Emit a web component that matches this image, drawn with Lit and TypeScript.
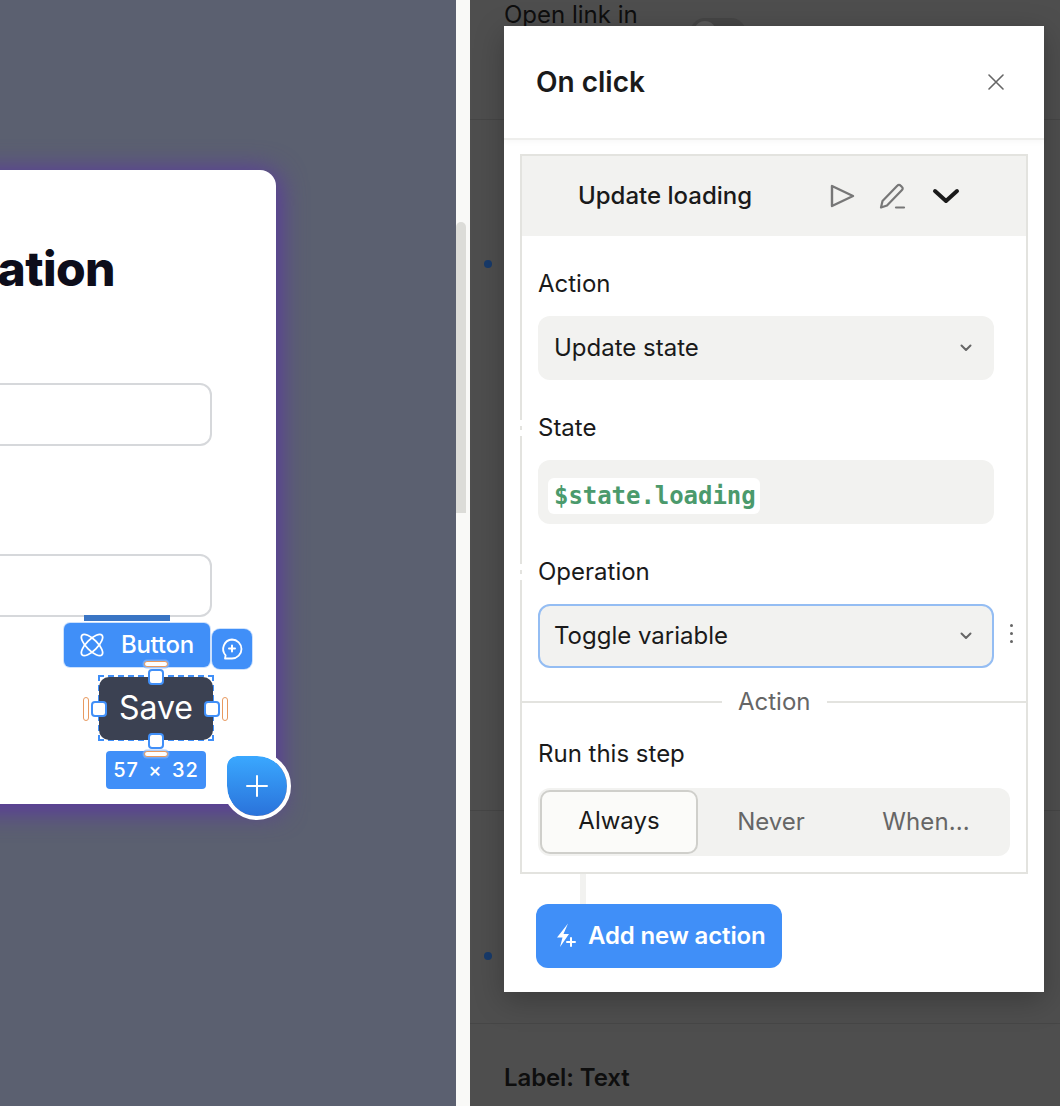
import { LitElement, html, css } from "lit";
import { customElement } from "lit/decorators.js";

const chev = html`<svg class="chev" width="12" height="8" viewBox="0 0 12 8" fill="none"><path d="M1.5 1.5 6 6l4.5-4.5" stroke="#666" stroke-width="2" stroke-linecap="round" stroke-linejoin="round"/></svg>`;

@customElement("app-root")
export class AppRoot extends LitElement {
  static styles = css`
    :host { display: block; width: 1060px; height: 1106px; overflow: hidden; font-family: Inter, "Liberation Sans", sans-serif; color: #1a1a1a; }
    * { box-sizing: border-box; }
    .page { display: flex; width: 1060px; height: 1106px; }
    .canvas { position: relative; width: 456px; height: 1106px; background: #5b6070; overflow: hidden; flex: none; }
    .card { position: absolute; left: -300px; top: 170px; width: 576px; height: 634px; background: #fff; border-radius: 16px 16px 0 0; box-shadow: 0 4px 26px 4px #5a38a0; }
    .title { position: absolute; right: 161px; top: 66px; font-size: 48px; line-height: 66px; font-weight: 800; color: #0d0d1a; letter-spacing: -0.6px; white-space: nowrap; }
    .input { position: absolute; left: 0; width: 512px; height: 63px; border: 2px solid #d6d8db; border-radius: 12px; background: #fff; }
    .input.a { top: 213px; }
    .input.b { top: 384px; }
    .strip { position: absolute; left: 84px; top: 615px; width: 86px; height: 6px; background: #3a75c4; }
    .tag { position: absolute; left: 64px; top: 623px; width: 146px; height: 44px; background: #408ff8; border-radius: 6px; color: #fff; display: flex; align-items: center; gap: 17px; padding: 0 0 2px 16px; font-size: 24px; font-weight: 500; letter-spacing: -0.3px; box-shadow: 0 0 0 1px #7fb3fa66; }
    .tag svg { flex: none; margin-top: 2px; }
    .comment { position: absolute; left: 212px; top: 629px; width: 40px; height: 40px; background: #408ff8; border-radius: 8px; display: flex; align-items: center; justify-content: center; box-shadow: 0 0 0 1px #7fb3fa66; }
    .dash { position: absolute; left: 98px; top: 675px; width: 116px; height: 66px; border: 2px dashed #408ff8; }
    .save { position: absolute; left: 99px; top: 677px; width: 114px; height: 63px; background: #3b4152; border-radius: 10px; color: #fff; font-size: 32px; line-height: 61px; text-align: center; }
    .h { position: absolute; width: 16px; height: 16px; background: #fff; border: 2px solid #408ff8; border-radius: 4px; }
    .pill { position: absolute; background: #fff; border: 1.5px solid #e89a60; border-radius: 3px; }
    .pill.hz { width: 24px; height: 6px; box-shadow: 0 0 0 1.5px #8ab6f4aa; }
    .pill.vt { width: 6px; height: 24px; }
    .size { position: absolute; left: 106px; top: 751px; width: 100px; height: 38px; background: #408ff8; border-radius: 4px; color: #fff; font-size: 20px; line-height: 38px; text-align: center; letter-spacing: 1px; word-spacing: 3px; font-weight: 500; white-space: pre; }
    .add { position: absolute; left: 223px; top: 752px; width: 68px; height: 68px; border-radius: 14px 50% 50% 50%; border: 4px solid #fff; background: linear-gradient(#3aa8ff, #2a72da) padding-box; display: flex; align-items: center; justify-content: center; }

    .rail { position: relative; width: 14px; height: 1106px; background: #f9f9f7; flex: none; }
    .thumb { position: absolute; left: 0; top: 222px; width: 10px; height: 291px; background: #dcdcd8; border-radius: 6px 6px 0 0; }

    .back { position: relative; flex: 1; height: 1106px; background: #4e4e4e; display: flex; flex-direction: column; overflow: hidden; }
    .sec { border-bottom: 1px solid #464646; flex: none; position: relative; }
    .sec.s1 { height: 120px; }
    .sec.s2 { height: 691px; }
    .sec.s3 { height: 213px; }
    .open { position: absolute; left: 34px; top: 0; font-size: 24px; line-height: 30px; color: #0e0e0e; }
    .toggle { position: absolute; left: 220px; top: 18px; width: 56px; height: 30px; border-radius: 15px; background: #454545; }
    .toggle:before { content: ""; position: absolute; left: 4px; top: 3px; width: 22px; height: 22px; border-radius: 50%; background: #5a5a5a; }
    .dot { position: absolute; left: 14px; width: 8px; height: 8px; border-radius: 50%; background: #173a6a; }
    .lbl { padding: 39px 0 0 34px; font-size: 24px; line-height: 30px; font-weight: 600; color: #0e0e0e; letter-spacing: -0.1px; }

    .modal { position: absolute; left: 504px; top: 26px; width: 540px; height: 966px; background: #fff; box-shadow: 0 8px 28px rgba(0,0,0,.25); }
    .mhead { height: 114px; display: flex; align-items: center; justify-content: space-between; padding: 0 40px 0 32px; border-bottom: 2px solid #eeeeec; box-shadow: 0 2px 6px rgba(0,0,0,.03); }
    .mhead h2 { margin: 0; font-size: 28px; font-weight: 600; line-height: 36px; }
    .mbody { padding: 14px 16px 0; }
    .block { position: relative; border: 2px solid #e3e3df; height: 720px; }
    .bhead { height: 80px; background: #f2f2f0; display: flex; align-items: center; padding-left: 56px; font-size: 24px; font-weight: 500; }
    .bhead .t { width: 251px; padding-bottom: 2px; }
    .bhead .ic { display: flex; align-items: center; gap: 24px; }
    .bbody { padding: 32px 16px 0; display: flex; flex-direction: column; }
    .fl { font-size: 24px; line-height: 32px; margin-bottom: 16px; }
    .sel { width: 456px; height: 64px; border-radius: 12px; background: #f2f2f0; display: flex; align-items: center; justify-content: space-between; padding: 0 22px 2px 16px; font-size: 24px; margin-bottom: 32px; flex: none; }
    .sel .chev { margin-top: 2px; }
    .sel.focus { border: 2px solid #94bdf3; padding: 0 20px 2px 14px; margin-bottom: 18px; position: relative; }
    .sel.code { padding: 8px 0 0 10px; }
    .chip { background: #fff; border-radius: 6px; height: 36px; padding: 0 4px 0 6px; font-family: "DejaVu Sans Mono", "Liberation Mono", monospace; font-weight: 700; font-size: 24px; line-height: 36px; color: #4b9a6c; letter-spacing: -0.05px; }
    .more { position: absolute; left: 488px; top: 468px; display: flex; flex-direction: column; gap: 5px; }
    .more i { display: block; width: 3px; height: 3px; border-radius: 50%; background: #666; }
    .div { display: flex; align-items: center; margin: 0 0 20px -16px; width: 504px; height: 32px; color: #666; font-size: 24px; }
    .div span { padding: 0 16px 2px; }
    .div:before, .div:after { content: ""; height: 2px; background: #e3e3df; }
    .div:before { width: 200px; }
    .div:after { flex: 1; }
    .seg { width: 472px; height: 68px; background: #f2f2f0; border-radius: 12px; padding: 2px; display: flex; align-items: center; font-size: 24px; color: #666; }
    .seg div { text-align: center; padding-bottom: 2px; }
    .seg .on { width: 158px; height: 64px; line-height: 58px; background: #fbfbf9; border: 2px solid #cfcfcb; border-radius: 10px; color: #1a1a1a; flex: none; }
    .seg .n { width: 146px; }
    .seg .w { flex: 1; letter-spacing: .1px; }
    .tick { position: absolute; left: -2px; width: 2px; height: 16px; background: linear-gradient(#fff 0 40%, #e3e3df 40% 60%, #fff 60%); }
    .conn { width: 6px; height: 30px; margin-left: 60px; background: #f2f2f0; }
    .btn { width: 246px; height: 64px; margin-left: 32px; border-radius: 12px; background: #408ff8; color: #fff; font-size: 24px; font-weight: 600; letter-spacing: -0.15px; display: flex; align-items: center; gap: 10px; padding: 0 0 2px 18px; }
    .btn svg { margin-top: 2px; flex: none; }
  `;

  render() {
    return html`<div class="page">
      <div class="canvas">
        <div class="card">
          <div class="title">ation</div>
          <div class="input a"></div>
          <div class="input b"></div>
        </div>
        <div class="strip"></div>
        <div class="tag">
          <svg width="24" height="24" viewBox="0 0 24 24" fill="none" stroke="#fff" stroke-width="1.8"><ellipse cx="12" cy="12" rx="14" ry="5.5" transform="rotate(45 12 12)"/><ellipse cx="12" cy="12" rx="14" ry="5.5" transform="rotate(-45 12 12)"/></svg>
          <span>Button</span>
        </div>
        <div class="comment">
          <svg width="24" height="24" viewBox="0 0 24 24" fill="none" stroke="#fff" stroke-width="1.8" stroke-linecap="round" stroke-linejoin="round"><path d="M12.5 2a9.5 9.5 0 0 1 0 19H5.5l.6-3.2A9.5 9.5 0 0 1 12.5 2Z" transform="translate(-.5 .5)"/><path d="M12 8.5v6M9 11.5h6" stroke-width="2"/></svg>
        </div>
        <div class="pill hz" style="left:144px;top:661px"></div>
        <div class="dash"></div>
        <div class="save">Save</div>
        <div class="h" style="left:148px;top:669px"></div>
        <div class="h" style="left:148px;top:733px"></div>
        <div class="h" style="left:91px;top:701px"></div>
        <div class="h" style="left:204px;top:701px"></div>
        <div class="pill vt" style="left:83px;top:697px"></div>
        <div class="pill vt" style="left:222px;top:697px"></div>
        <div class="size">57 × 32</div>
        <div class="pill hz" style="left:144px;top:751px"></div>
        <div class="add">
          <svg width="22" height="22" viewBox="0 0 22 22" stroke="#fff" stroke-width="2" stroke-linecap="round"><path d="M11 1v20M1 11h20"/></svg>
        </div>
      </div>
      <div class="rail"><div class="thumb"></div></div>
      <div class="back">
        <div class="sec s1"><div class="open">Open link in</div><div class="toggle"></div></div>
        <div class="sec s2"><div class="dot" style="top:140px"></div><div class="dot" style="top:832px"></div></div>
        <div class="sec s3"></div>
        <div class="lbl">Label: Text</div>
      </div>
      <div class="modal">
        <div class="mhead">
          <h2>On click</h2>
          <svg width="16" height="16" viewBox="0 0 16 16" stroke="#666" stroke-width="1.6" stroke-linecap="round"><path d="M1 1l14 14M15 1 1 15"/></svg>
        </div>
        <div class="mbody">
          <div class="block">
            <div class="bhead">
              <span class="t">Update loading</span>
              <span class="ic">
                <svg width="26" height="26" viewBox="0 0 26 26" fill="none" stroke="#777" stroke-width="2.4" stroke-linejoin="round"><path d="M3 3v20l21-10Z"/></svg>
                <svg width="28" height="28" viewBox="0 0 28 28" fill="none" stroke="#777" stroke-width="2.2" stroke-linejoin="round" stroke-linecap="round"><path d="M2 25.5l1.5-6.5L18.5 3.5a2 2 0 0 1 3 0l1.5 1.5a2 2 0 0 1 0 3L8 23.5Z"/><path d="M17 25.5h8"/></svg>
                <svg width="30" height="16" viewBox="0 0 30 16" fill="none" stroke="#1a1a1a" stroke-width="4" stroke-linecap="round" stroke-linejoin="round"><path d="M4 3l11 10L26 3"/></svg>
              </span>
            </div>
            <div class="tick" style="top:264px"></div>
            <div class="tick" style="top:408px"></div>
            <div class="bbody">
              <div class="fl">Action</div>
              <div class="sel"><span>Update state</span>${chev}</div>
              <div class="fl">State</div>
              <div class="sel code"><span class="chip">$state.loading</span></div>
              <div class="fl">Operation</div>
              <div class="sel focus"><span>Toggle variable</span>${chev}</div>
              <div class="more"><i></i><i></i><i></i></div>
              <div class="div"><span>Action</span></div>
              <div class="fl" style="margin-bottom:18px">Run this step</div>
              <div class="seg"><div class="on">Always</div><div class="n">Never</div><div class="w">When...</div></div>
            </div>
          </div>
          <div class="conn"></div>
        </div>
        <div class="btn">
          <svg width="24" height="26" viewBox="0 0 24 26" fill="none"><path d="M14 .5 3 14.5h5.5L6 24l9-13H9.5Z" fill="#fff"/><path d="M17 15v8M13 19h8" stroke="#fff" stroke-width="2" stroke-linecap="round"/></svg>
          <span>Add new action</span>
        </div>
      </div>
    </div>`;
  }
}
